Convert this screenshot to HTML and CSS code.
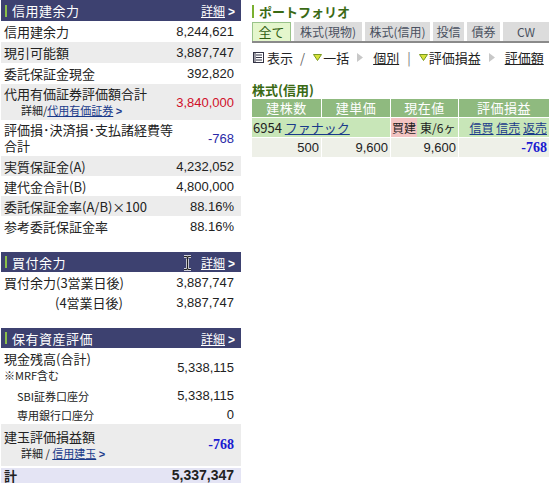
FILE: index.html
```html
<!DOCTYPE html>
<html lang="ja">
<head>
<meta charset="utf-8">
<link rel="stylesheet" href="styles.css">
</head>
<body>
<div class="page">
  <div class="left">
    <div class="hd"><span class="bar"></span><span class="ttl">信用建余力</span><a class="more">詳細<b>&gt;</b></a></div>
    <div class="row h21"><span>信用建余力</span><span class="num">8,244,621</span></div>
    <div class="row h21 g"><span>現引可能額</span><span class="num">3,887,747</span></div>
    <div class="row h21"><span>委託保証金現金</span><span class="num">392,820</span></div>
    <div class="row h36 g">
      <div class="lines"><span>代用有価証券評価額合計</span><span class="sub ind">詳細/<a class="lnk">代用有価証券</a> <b class="arr">&gt;</b></span></div>
      <span class="num red">3,840,000</span>
    </div>
    <div class="row h36">
      <div class="lines"><span>評価損･決済損･支払諸経費等</span><span>合計</span></div>
      <span class="num blue">-768</span>
    </div>
    <div class="row h20 g"><span>実質保証金(A)</span><span class="num">4,232,052</span></div>
    <div class="row h20"><span>建代金合計(B)</span><span class="num">4,800,000</span></div>
    <div class="row h20 g"><span>委託保証金率(A/B)×100</span><span class="num">88.16%</span></div>
    <div class="row h21"><span>参考委託保証金率</span><span class="num">88.16%</span></div>

    <div class="hd sec2"><span class="bar"></span><span class="ttl">買付余力</span>
      <svg class="ibeam" width="9" height="16" viewBox="0 0 9 16"><path d="M1 1.5h2.5l1 1 1-1H8M4.5 2.5v11M1 14.5h2.5l1-1 1 1H8" fill="none" stroke="#fff" stroke-width="2.6"/><path d="M1 1.5h2.5l1 1 1-1H8M4.5 2.5v11M1 14.5h2.5l1-1 1 1H8" fill="none" stroke="#222" stroke-width="1.2"/></svg>
      <a class="more">詳細<b>&gt;</b></a></div>
    <div class="row h20"><span>買付余力(3営業日後)</span><span class="num">3,887,747</span></div>
    <div class="row h20"><span class="ind4">(4営業日後)</span><span class="num">3,887,747</span></div>

    <div class="hd sec3"><span class="bar"></span><span class="ttl">保有資産評価</span><a class="more">詳細<b>&gt;</b></a></div>
    <div class="row h38">
      <div class="lines"><span>現金残高(合計)</span><span class="sub">※MRF含む</span></div>
      <span class="num">5,338,115</span>
    </div>
    <div class="row h19"><span class="sub ind2">SBI証券口座分</span><span class="num">5,338,115</span></div>
    <div class="row h19"><span class="sub ind2">専用銀行口座分</span><span class="num">0</span></div>
    <div class="row h42 g">
      <div class="lines"><span>建玉評価損益額</span><span class="sub ind">詳細 / <a class="lnk">信用建玉</a> <b class="arr">&gt;</b></span></div>
      <span class="num bblue">-768</span>
    </div>
    <div class="row total"><span class="bold">計</span><span class="num bold">5,337,347</span></div>
  </div>

  <div class="right">
    <div class="ptitle"><span class="gbar"></span>ポートフォリオ</div>
    <div class="tabs">
      <span class="tab on w39">全て</span>
      <span class="tab w68">株式(現物)</span>
      <span class="tab w65">株式(信用)</span>
      <span class="tab w31">投信</span>
      <span class="tab w33">債券</span>
      <span class="tab w46">CW</span>
    </div>
    <div class="tools">
      <svg class="ico" width="11" height="11" viewBox="0 0 11 11"><rect x="0.5" y="0.5" width="10" height="10" fill="#fff" stroke="#334"/><path d="M3 3h6M3 5.5h6M3 8h6M2 0.5v10" stroke="#334" stroke-width="1"/></svg>
      <span class="t1">表示</span><span class="sl">/</span>
      <svg class="tri" width="9" height="7" viewBox="0 0 9 7"><path d="M0.5 0.5h8L4.5 6.5z" fill="#d8e23a" stroke="#7a9a20"/></svg>
      <span>一括</span>
      <svg class="play" width="6" height="9" viewBox="0 0 6 9"><path d="M0 0l6 4.5L0 9z" fill="#c8c8c8"/></svg>
      <a class="u">個別</a>
      <span class="sep">|</span>
      <svg class="tri" width="9" height="7" viewBox="0 0 9 7"><path d="M0.5 0.5h8L4.5 6.5z" fill="#d8e23a" stroke="#7a9a20"/></svg>
      <span>評価損益</span>
      <svg class="play" width="6" height="9" viewBox="0 0 6 9"><path d="M0 0l6 4.5L0 9z" fill="#c8c8c8"/></svg>
      <a class="u">評価額</a>
    </div>
    <div class="stitle">株式(信用)</div>
    <div class="tbl">
      <div class="th">建株数</div><div class="th">建単価</div><div class="th">現在値</div><div class="th">評価損益</div>
      <div class="td r1 span2">6954 <a class="lnk">ファナック</a></div>
      <div class="td r1 cur"><span class="buy">買建</span><span class="mk">東/6ヶ</span></div>
      <div class="td r1 acts"><a class="lnk">信買</a> <a class="lnk">信売</a> <a class="lnk">返売</a></div>
      <div class="td r2 rt">500</div><div class="td r2 rt">9,600</div><div class="td r2 rt">9,600</div><div class="td r2 rt bblue">-768</div>
    </div>
  </div>
</div>
</body>
</html>
```

FILE: styles.css
```css
* { box-sizing: border-box; }
body { margin: 0; background: #fff; font-family: "Noto Sans CJK JP", "Liberation Sans", sans-serif; font-size: 13px; color: #222; }
.page { display: flex; gap: 11px; }
.left { width: 240px; margin-left: 1px; flex: none; }
.hd { display: flex; align-items: center; height: 21px; background: #3d4170; color: #fff; position: relative; padding: 0 6px 0 4px; }
.hd .bar { width: 2px; height: 12px; background: #8bbf4a; margin-right: 5px; }
.hd .ttl { font-size: 13px; flex: 1; letter-spacing: 0.5px; }
.hd .more { color: #fff; text-decoration: underline; font-size: 12px; }
.hd .more b { text-decoration: none; display: inline-block; margin-left: 3px; font-family: "Liberation Sans", sans-serif; font-weight: bold; }
.sec2 { margin-top: 15px; height: 20px; }
.sec3 { margin-top: 16px; height: 20px; }
.ibeam { position: absolute; left: 182px; top: 3px; }
.row { display: flex; justify-content: space-between; align-items: center; padding: 0 7px 0 3px; }
.row.g { background: #ececec; }
.h21 { height: 21px; } .h20 { height: 20px; } .h19 { height: 19px; } .h36 { height: 36px; } .h38 { height: 38px; } .h42 { height: 42px; }
.lines { display: flex; flex-direction: column; line-height: 16px; }
.sub { font-size: 11px; }
.ind { padding-left: 17px; }
.ind2 { padding-left: 13px; }
.ind4 { padding-left: 51px; }
.num { font-family: "Liberation Sans", sans-serif; font-size: 13px; }
.red { color: #d0102a; }
.blue { color: #2a2aa8; }
.bblue { color: #1a1ad0; font-weight: bold; font-family: "Liberation Serif", "Liberation Sans", serif; font-size: 14px; }
.lnk { color: #1a3a8a; text-decoration: underline; }
.arr { color: #1a3a8a; font-family: "Liberation Sans", sans-serif; }
.total { margin-top: 2px; height: 18px; background: #e4e4f4; align-items: flex-start; line-height: 15px; }
.bold { font-weight: bold; }
.total .num { font-size: 14px; }

.right { width: 297px; flex: none; }
.ptitle { display: flex; align-items: center; height: 22px; padding-top: 1px; font-weight: bold; color: #3a6a14; font-size: 13px; }
.gbar { width: 2px; height: 13px; background: #7ab030; margin-right: 5px; }
.tabs { display: flex; gap: 3px; height: 21px; border-bottom: 2px solid #8a8a8a; }
.tab { height: 19px; line-height: 19px; text-align: center; background: #dcdcdc; color: #4a5160; font-size: 12px; }
.tab.on { background: #e4f6cc; border: 1px solid #99c38a; border-bottom: none; color: #2f5e12; line-height: 17px; font-size: 13px; }
.w39 { width: 39px; } .w68 { width: 68px; } .w65 { width: 65px; } .w31 { width: 31px; } .w33 { width: 33px; } .w46 { width: 46px; }
.tools { display: flex; align-items: center; height: 26px; padding-top: 2px; font-size: 13px; white-space: nowrap; }
.tools .ico { margin: 0 3px 0 1px; }
.tools .sl { margin: 0 8px 0 7px; color: #666; }
.tools .tri { margin-right: 1px; }
.tools .play { margin: 0 10px 0 8px; }
.tools .u { text-decoration: underline; color: #222; }
.tools .sep { margin: 0 8px; color: #777; }
.stitle { margin-top: 12px; height: 17px; line-height: 17px; font-weight: bold; color: #3a6a14; font-size: 13px; }
.tbl { display: grid; grid-template-columns: 69px 68px 67px 1fr; gap: 1px; margin-top: 1px; }
.th { height: 18px; line-height: 18px; background: #8fba7f; color: #fff; text-align: center; font-size: 13px; letter-spacing: 0.5px; }
.td { height: 19px; line-height: 19px; padding: 0 2px; white-space: nowrap; }
.r1 { background: #c8e6b8; }
.r2 { background: #eef0e8; height: 19px; }
.span2 { grid-column: span 2; padding-left: 1px; }
.cur { padding: 0; display: flex; font-size: 12px; overflow: hidden; }
.buy { background: #f2c4c2; padding: 0 1px; }
.mk { padding-left: 3px; }
.acts { text-align: right; padding-right: 2px; font-size: 12px; }
.rt { text-align: right; font-family: "Liberation Sans", sans-serif; }
.td.bblue { font-family: "Liberation Serif", serif; }
```
